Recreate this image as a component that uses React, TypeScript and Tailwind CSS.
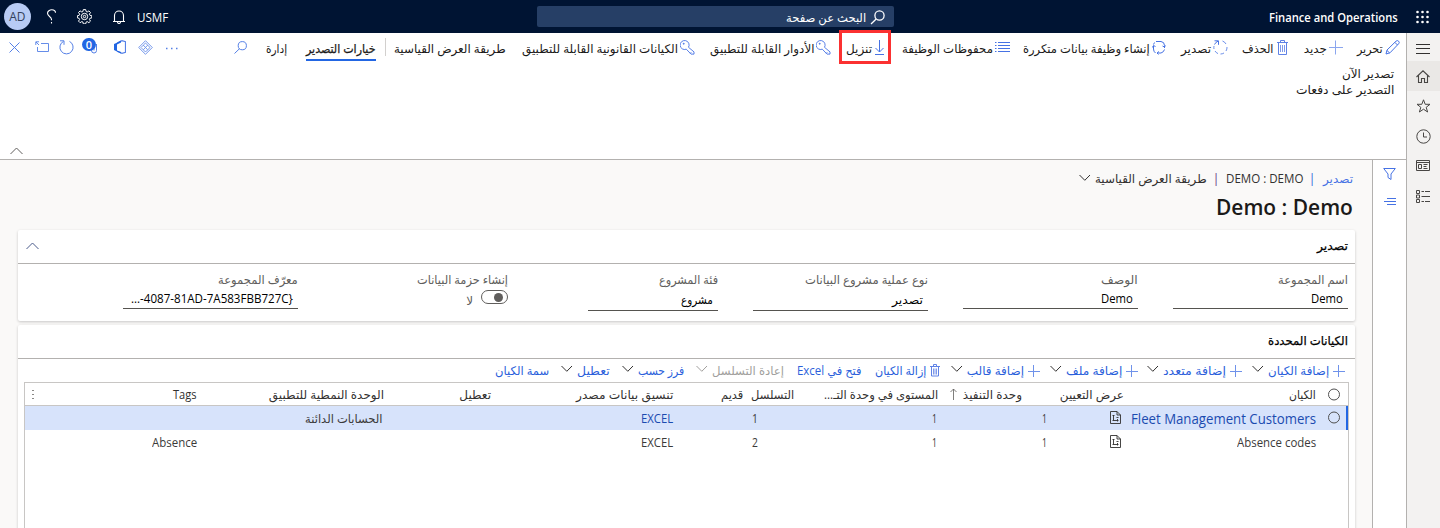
import { useLayoutEffect, useRef, useState, type ReactNode } from 'react';

/* Text that condenses or widens to fill a column of the given width. */
function T({ w, children, className = '', ltr = false }: { w: number; children: ReactNode; className?: string; ltr?: boolean }) {
  const ref = useRef<HTMLSpanElement>(null);
  const [scale, setScale] = useState(1);
  useLayoutEffect(() => {
    if (ref.current) setScale(w / ref.current.offsetWidth);
  }, [w]);
  return (
    <span className={`flex shrink-0 justify-start whitespace-nowrap ${className}`} style={{ width: w }}>
      <span ref={ref} dir={ltr ? 'ltr' : undefined} className="block shrink-0 origin-right" style={{ transform: `scaleX(${scale})` }}>
        {children}
      </span>
    </span>
  );
}

function I({ children, w = 15, h = 15, className = '' }: { children: ReactNode; w?: number; h?: number; className?: string }) {
  return (
    <svg width={w} height={h} viewBox={`0 0 ${w} ${h}`} fill="none" stroke="currentColor" strokeWidth="1" className={`block shrink-0 ${className}`}>
      {children}
    </svg>
  );
}

const Plus = () => <I w={14} className="text-[#8ba6ee]"><path d="M6.500 0.500v14M0 7.500h14" /></I>;
const SmallPlus = () => <I w={12} h={12} className="text-[#6f92ea]"><path d="M5.500 0v12M0 6.500h12" /></I>;
const Trash = () => (
  <I w={11} className="text-[#5f82e6]"><path d="M0 2.500h11M3.500 2.500v-2h4v2M1.500 2.500v12h8v-12" /><path d="M3.500 5v7M5.500 5v7M7.500 5v7" strokeWidth=".8" /></I>
);
const SmallTrash = () => (
  <I w={10} h={13} className="text-[#5f82e6]"><path d="M0 2.500h10M3.500 2.500v-2h3v2M1.500 2.500v9.500h7v-9.500" /><path d="M3.500 4.500v6M5 4.500v6M6.500 4.500v6" strokeWidth=".8" /></I>
);
const Key = () => (
  <I><path d="M8.500 7.300A4.500 4.500 0 1 0 6.300 9.200l4.700 4.900h3v-2.200zM10.300 13.200l1-1" strokeWidth=".9" /><circle cx="3.700" cy="3.700" r=".6" fill="currentColor" strokeWidth=".6" /></I>
);
const Down = ({ className = '' }: { className?: string }) => (
  <I w={12} h={8} className={className}><path d="M.5 1l5.300 5.300L11 1" /></I>
);
const Up = ({ className = '' }: { className?: string }) => (
  <I w={13} h={8} className={className}><path d="M.5 7l6-6 6 6" /></I>
);
const Ring = () => <I w={13} h={13} className="text-[#505050]"><circle cx="7" cy="6.500" r="5.500" /></I>;

function Cmd({ cell, icon, label, w, gap = 'gap-[2px]', box = false }: { cell: string; icon?: ReactNode; label: string; w: number; gap?: string; box?: boolean }) {
  return (
    <div className={`relative flex h-[30px] shrink-0 items-center ${gap} ${cell}`}>
      {icon && <span className="-mt-[2px] text-[#4672e4]">{icon}</span>}
      <T w={w} className="pt-px">{label}</T>
      {box && <span className="absolute -right-[7px] -top-[3px] h-[34px] w-[52px] border-[3px] border-[#fb3131]" />}
    </div>
  );
}

function Icon({ cell, children }: { cell: string; children: ReactNode }) {
  return <div className={`flex h-[28px] shrink-0 items-center text-[#5580e6] ${cell}`}>{children}</div>;
}

function Topbar() {
  return (
    <header className="flex h-[33px] shrink-0 items-center bg-[#001433] text-white">
      <div className="flex w-[50px] justify-start pr-[10px]">
        <I w={14} h={14}>
          {[1.500, 6.500, 11.500].map((y) => [1.500, 6.500, 11.500].map((x) => <circle key={`${x}-${y}`} cx={x} cy={y + 0.500} r="1.300" fill="currentColor" stroke="none" />))}
        </I>
      </div>
      <T w={129} ltr className="mr-[-8px] pt-[2px] text-[12.5px] font-semibold">Finance and Operations</T>
      <div className="mr-[375px] flex h-[21px] w-[357px] shrink-0 items-center rounded-[2px] bg-[#263f66] pr-[9px]">
        <I w={15} h={15} className="mt-px"><circle cx="9.500" cy="5.500" r="4.600" strokeWidth="1.300" /><path d="M6.200 9L1 14" strokeWidth="1.300" /></I>
        <T w={80} className="mr-[4px] pt-[2px]">البحث عن صفحة</T>
      </div>
      <T w={31} ltr className="mr-[369px] pt-[2px] text-[12px]">USMF</T>
      <I w={12} h={14} className="mr-[12px] text-white"><path d="M0 11.500h12M1.500 11.500v-6a4.500 4.500 0 0 1 9 0v6M4.500 12a1.500 1.500 0 0 0 3 0" strokeWidth="1.100" /></I>
      <I w={15} h={15} className="mr-[21px]">
        <path d="M6.300.6h2.400l.4 1.900 1.100.5 1.700-1.100 1.600 1.600-1.100 1.700.5 1.100 1.900.4v2.200l-1.900.4-.5 1.100 1.100 1.700-1.600 1.600-1.700-1.100-1.100.5-.4 1.800H6.300l-.4-1.900-1.100-.4-1.700 1.100-1.600-1.600 1.100-1.700-.5-1.100-1.700-.4V6.700l1.800-.4.5-1.100L1.500 3.500l1.600-1.600L4.800 3l1.100-.5z" />
        <circle cx="7.500" cy="7.500" r="3.200" />
        <circle cx="7.500" cy="7.500" r="1.200" />
      </I>
      <I w={11} h={15} className="mr-[20px]"><path d="M9.500 3.800C9.500 1.600 7.800.8 5.800.8S1.500 2 1.500 4.300C1.500 7.500 5.500 7.500 5.500 10.500v.7M5.500 13v1.500" strokeWidth="1.100" /></I>
      <span className="mr-[15px] flex h-[27px] w-[27px] shrink-0 items-center justify-center rounded-full bg-[#b7cbf5] text-[12px] text-[#33415c]"><T w={16} ltr>AD</T></span>
    </header>
  );
}

function CommandBar() {
  return (
    <div className="flex h-[127px] shrink-0 flex-col border-b border-[#b3b1af] bg-white text-[#1b1a19]">
      <div className="flex h-[30px] shrink-0 pr-[6px]">
        <Cmd cell="w-[57px]" w={26} label="تحرير" icon={<I><path d="M1 14l1-4L11 1.200a1.600 1.600 0 0 1 2.600 2.600L5 12.800zM9.800 2.300l2.700 2.700M2 10.500l2.500 2.300" /></I>} />
        <Cmd cell="w-[55px]" w={23} label="جديد" icon={<Plus />} />
        <Cmd cell="w-[60px]" w={31} gap="gap-[4px]" label="الحذف" icon={<Trash />} />
        <Cmd cell="w-[62px]" w={30} label="تصدير" icon={<I><path d="M9.500 1a6.500 6.500 0 0 1 3.500 3M14 7a6.500 6.500 0 0 1-1 4M11 13a6.500 6.500 0 0 1-3.500 1M5 13.600a6.500 6.500 0 0 1-3-2.600M1 9a6.500 6.500 0 0 1 0-3" strokeWidth=".8" /><path d="M1.500 4.500A6.500 6.500 0 0 1 5 1.200M1.500.8h4v4" /></I>} />
        <Cmd cell="w-[156px]" w={127} label="إنشاء وظيفة بيانات متكررة" icon={<I w={14}><path d="M4 1.500h5a4 4 0 0 1 3.500 4V8M13.500 5.500l-1 1.500-2-1M12.500 9.500a5 5 0 0 1-3.500 3.500H5.500M7 11.500L5 13l1.500 1.500M3.500 13A5 5 0 0 1 1.500 9V6M.3 7.500l1.200-2 2 1M1.500 4.500l1-2" /></I>} />
        <Cmd cell="w-[126px]" w={91} label="محفوظات الوظيفة" icon={<I><path d="M3 2.500h12M3 5.500h12M3 8.500h12M3 11.500h12M0 2.500h1.500M0 5.500h1.500M0 8.500h1.500M0 11.500h1.500" /></I>} />
        <Cmd cell="w-[53px]" w={26} box label="تنزيل" gap="gap-[3px]" icon={<I w={9}><path d="M4.500 0v12M.5 8l4 4 4-4M0 14.500h9" /></I>} />
        <Cmd cell="w-[136px]" w={105} label="الأدوار القابلة للتطبيق" icon={<Key />} />
        <Cmd cell="w-[189px]" w={156} label="الكيانات القانونية القابلة للتطبيق" icon={<Key />} />
        <Cmd cell="w-[120px]" w={112} label="طريقة العرض القياسية" />
        <div className="mt-[5px] h-[18px] w-[8px] shrink-0 border-r border-[#d2d0ce]" />
        <div className="flex h-[28px] w-[91px] shrink-0 items-start pr-[2px]">
          <div className="flex h-[28px] items-center border-b-2 border-[#2266e3]"><T w={70} className="pt-[5px] [-webkit-text-stroke:0.25px_currentColor]">خيارات التصدير</T></div>
        </div>
        <Cmd cell="w-[40px]" w={21} label="إدارة" />
        <Icon cell="w-[68px]"><I w={13} h={13}><circle cx="8.300" cy="4.700" r="4.100" /><path d="M5.500 7.700L.5 12.500" /></I></Icon>
        <Icon cell="w-[26px]"><I w={14} h={5}><path d="M1 3.500h1.500M6 3.500h1.500M11 3.500h1.500" strokeWidth="1.300" /></I></Icon>
        <Icon cell="w-[27px]"><I><path d="M7.500.700l6.800 6.800-6.800 6.800L.700 7.500zM7.500 3l2.200 2.200-2.200 2.200-2.200-2.200zM5.300 5.200L3 7.500l2.300 2.300 2.200-2.300M9.700 5.200L12 7.500 9.700 9.800 7.500 7.500M5.300 9.800L7.500 12l2.200-2.200" strokeWidth=".8" /></I></Icon>
        <Icon cell="w-[28px]"><I w={12} h={14}><path d="M3 3l5-2.300 3.500 1v10.600l-3.500 1-5-2" strokeWidth="1.200" /><path d="M0 4l3.500-1.500L7 .5v2L3 4.500v6L7 12v1.500L0 10z" fill="#2266e3" stroke="none" /></I></Icon>
        <div className="relative flex h-[28px] w-[24px] shrink-0 items-center text-[#5580e6]">
          <I w={16} h={16}><path d="M9.500 8v3.500a2.500 2.500 0 0 0 5 0V5M12 5v6.500" /></I>
          <span className="absolute right-[2px] top-[5px] flex h-[13px] w-[14px] items-center justify-center rounded-full bg-[#2266e3] text-[11px] font-semibold text-white">0</span>
        </div>
        <Icon cell="w-[25px]"><I><path d="M4.500 1.400a6.600 6.600 0 1 0 6 0M1 .8h4v4" /></I></Icon>
        <Icon cell="w-[29px]"><I w={14} h={12}><path d="M6 2.500h7.500v8H2.500V6M1 1l3 3M.8 4V.8H4" strokeWidth=".9" /></I></Icon>
        <Icon cell="w-[19px]"><I w={11} h={11}><path d="M.5.500l10 10M10.500.500l-10 10" /></I></Icon>
      </div>
      <div className="mr-[12px] mt-[3px] flex flex-col">
        <T w={52} className="h-[16px] items-center">تصدير الآن</T>
        <T w={98} className="h-[16px] items-center">التصدير على دفعات</T>
      </div>
      <div className="mt-auto flex justify-end pb-[4px] pl-[10px] text-[#605e5c]"><Up /></div>
    </div>
  );
}

function Sidebar() {
  const item = 'flex h-[30px] items-center justify-center pr-px';
  return (
    <nav className="flex w-[34px] shrink-0 flex-col border-l border-[#b3b1af] bg-[#f3f2f1] text-[#484644]">
      <div className="flex h-[28px] items-center justify-center pr-px pt-[4px] text-[#323130]"><I w={14} h={10}><path d="M0 .500h14M0 4.500h14M0 9.500h14" /></I></div>
      <div className={`${item} bg-[#eae8e6]`}><I w={14} h={13}><path d="M.5 7L7 .8 13.500 7M2.500 5.500v7h3v-4h3v4h3v-7" strokeWidth="1.100" /></I></div>
      <div className={item}><I w={15} h={14}><path d="M7.500.8l1.700 4.500h4.800l-3.800 3 1.400 4.700-4.100-2.800L3.400 13l1.400-4.700L1 5.300h4.800z" /></I></div>
      <div className={item}><I><circle cx="7.500" cy="7.500" r="6.700" /><path d="M7.500 3.500v4.500h3.500" /></I></div>
      <div className={item}><I w={14} h={12}><path d="M.5.500h13v10H.500zM.5 2.500h13M2.500 4.500h3v4h-3zM7.500 4.500h4M7.500 6.500h3M7.500 8.500h4" /></I></div>
      <div className={item}><I w={14} h={13}><path d="M.5.500h3v3h-3zM.5 5h3v3h-3zM.5 9.500h3v3h-3zM5.500 1.500H8M9 1.500h5M5.500 6.500H14M5.500 11.500H8M9 11.500h5" /></I></div>
    </nav>
  );
}

function Field({ cell, line, label, lw, value, vw, ltr = false }: { cell: string; line: string; label: string; lw: number; value: string; vw: number; ltr?: boolean }) {
  return (
    <div className={`flex shrink-0 flex-col pt-[8px] ${cell}`}>
      <T w={lw} className="h-[16px] items-center text-[#605e5c]">{label}</T>
      <div className={`flex items-center border-b border-[#55534f] pr-[5px] text-black ${line}`}>
        <T w={vw} ltr={ltr} className={`h-[18px] items-center ${ltr ? 'pt-[2px]' : 'pt-px'}`}>{value}</T>
      </div>
    </div>
  );
}

function ExportCard() {
  return (
    <section className="flex h-[91px] shrink-0 flex-col rounded-[2px] bg-white shadow-[0_1px_3px_rgba(0,0,0,0.2)]">
      <div className="flex h-[34px] shrink-0 items-center justify-between border-b border-[#b3b1af] pl-[8px] pr-[7px]">
        <T w={31} className="pb-px [-webkit-text-stroke:0.25px_currentColor]">تصدير</T>
        <Up className="-mt-[2px] text-[#4b5a8a]" />
      </div>
      <div className="flex pr-[7px]">
        <Field cell="w-[210px]" line="w-[175px] h-[21px]" label="اسم المجموعة" lw={70} value="Demo" vw={32} ltr />
        <Field cell="w-[210px]" line="w-[175px] h-[21px]" label="الوصف" lw={37} value="Demo" vw={32} ltr />
        <Field cell="w-[210px]" line="w-[175px] h-[23px]" label="نوع عملية مشروع البيانات" lw={123} value="تصدير" vw={31} />
        <Field cell="w-[210px]" line="w-[130px] h-[23px]" label="فئة المشروع" lw={59} value="مشروع" vw={32} />
        <div className="flex w-[210px] shrink-0 flex-col pt-[8px]">
          <T w={91} className="h-[16px] items-center text-[#605e5c]">إنشاء حزمة البيانات</T>
          <div className="flex items-start">
            <span className="mt-[2px] flex h-[14px] w-[27px] items-center rounded-full border border-[#605e5c] pr-[4px]"><span className="h-[9px] w-[9px] rounded-full bg-[#605e5c]" /></span>
            <T w={7} className="mr-[8px] pt-[6px] leading-[14px] text-[#605e5c]">لا</T>
          </div>
        </div>
        <Field cell="w-[210px]" line="w-[175px] h-[21px]" label="معرّف المجموعة" lw={80} value="...-4087-81AD-7A583FBB727C}" vw={162} ltr />
      </div>
    </section>
  );
}

function Tool({ cell, icon, label, w, down = false, className = 'text-[#2b5fdb]', arrow = 'text-[#323130]' }: { cell: string; icon?: ReactNode; label: string; w: number; down?: boolean; className?: string; arrow?: string }) {
  return (
    <div className={`flex shrink-0 items-center gap-[4px] ${cell} ${className}`}>
      {icon}
      <T w={w} className="pt-px">{label}</T>
      {down && <Down className={`-mt-[3px] ${arrow}`} />}
    </div>
  );
}

const MapIcon = () => (
  <I w={11} h={13} className="text-[#323130]"><path d="M.5.500h6.500l3.500 3.500v8.500h-10zM7 .5v3.500h3.500M3.500 4v5.500M2.500 4.500h2M2.500 9.500h6M7.500 8v2.500M6.500 6.500h2" strokeWidth=".9" /></I>
);

function Row({ selected = false, name, nameW, exec, level, seq, app, appW = 0, tag, tagW = 0 }: { selected?: boolean; name: string; nameW: number; exec: string; level: string; seq: string; app?: string; appW?: number; tag?: string; tagW?: number }) {
  return (
    <div className={`flex h-[24px] shrink-0 items-center text-[#3b3a39] ${selected ? 'border-r-2 border-[#2266e3] bg-[#d7e3fb] pr-[6px]' : 'pr-[8px]'}`}>
      <div className="-mt-px flex w-[24px] shrink-0">{selected && <Ring />}</div>
      <div className={`flex w-[195px] shrink-0 ${selected ? 'pt-px text-[14px] text-[#1b4bb0]' : 'pt-[2px]'}`}><T w={nameW} ltr>{name}</T></div>
      <div className="-mt-px flex w-[74px] shrink-0"><MapIcon /></div>
      <div className="flex w-[110px] shrink-0 pt-[2px]"><T w={5} ltr>{exec}</T></div>
      <div className="flex w-[179px] shrink-0 pt-[2px]"><T w={5} ltr>{level}</T></div>
      <div className="flex w-[85px] shrink-0 pt-[2px]"><T w={6} ltr>{seq}</T></div>
      <div className={`flex w-[290px] shrink-0 pt-[2px] ${selected ? 'text-[#1b4bb0]' : ''}`}><T w={32} ltr>EXCEL</T></div>
      <div className="flex w-[186px] shrink-0 pt-px">{app && <T w={appW}>{app}</T>}</div>
      <div className="flex shrink-0 pt-[2px]">{tag && <T w={tagW} ltr>{tag}</T>}</div>
    </div>
  );
}

function EntitiesCard() {
  return (
    <section className="mt-[4px] flex h-[210px] shrink-0 flex-col rounded-[2px] bg-white shadow-[0_1px_3px_rgba(0,0,0,0.2)]">
      <div className="flex h-[34px] shrink-0 items-center border-b border-[#b3b1af] pb-px pr-[7px]">
        <T w={80} className="[-webkit-text-stroke:0.25px_currentColor]">الكيانات المحددة</T>
      </div>
      <div className="flex h-[23px] shrink-0 pr-[10px]">
        <Tool cell="w-[103px]" icon={<SmallPlus />} w={61} label="إضافة الكيان" down />
        <Tool cell="w-[104px]" icon={<SmallPlus />} w={63} label="إضافة متعدد" down />
        <Tool cell="w-[98px]" icon={<SmallPlus />} w={56} label="إضافة ملف" down />
        <Tool cell="w-[100px]" icon={<SmallPlus />} w={57} label="إضافة قالب" down />
        <Tool cell="w-[78px]" icon={<SmallTrash />} w={51} label="إزالة الكيان" />
        <Tool cell="w-[78px]" w={65} label="فتح في Excel" />
        <Tool cell="w-[100px]" w={72} label="إعادة التسلسل" down className="text-[#a19f9d]" arrow="text-[#a19f9d]" />
        <Tool cell="w-[74px]" w={46} label="فرز حسب" down />
        <Tool cell="w-[61px]" w={33} label="تعطيل" down />
        <Tool cell="w-[60px]" w={54} label="سمة الكيان" />
      </div>
      <div className="ml-[6px] mr-[6px] flex flex-1 flex-col border-x border-t border-[#c8c6c4]">
        <div className="flex h-[23px] shrink-0 items-center border-b border-[#c8c6c4] pr-[8px] text-[#323130]">
          <div className="flex w-[24px] shrink-0"><Ring /></div>
          <div className="w-[192px] shrink-0 pt-px"><T w={27}>الكيان</T></div>
          <div className="w-[102px] shrink-0 pt-px"><T w={64}>عرض التعيين</T></div>
          <div className="flex w-[84px] shrink-0 items-center gap-[6px]"><T w={59} className="pt-px">وحدة التنفيذ</T><I w={7} h={12} className="text-[#605e5c]"><path d="M3.500 12V1M.5 4l3-3 3 3" strokeWidth=".8" /></I></div>
          <div className="w-[144px] shrink-0 pt-px"><T w={114}>المستوى في وحدة التـ...</T></div>
          <div className="w-[51px] shrink-0 pt-px"><T w={43}>التسلسل</T></div>
          <div className="w-[70px] shrink-0 pt-px"><T w={22}>قديم</T></div>
          <div className="w-[182px] shrink-0 pt-px"><T w={97}>تنسيق بيانات مصدر</T></div>
          <div className="w-[107px] shrink-0 pt-px"><T w={32}>تعطيل</T></div>
          <div className="w-[187px] shrink-0 pt-px"><T w={115}>الوحدة النمطية للتطبيق</T></div>
          <div className="w-[163px] shrink-0 pt-[2px]"><T w={24} ltr>Tags</T></div>
          <I w={3} h={11} className="text-[#8a8886]"><path d="M1 1.500h2M1 5.500h2M1 9.500h2" /></I>
        </div>
        <Row selected name="Fleet Management Customers" nameW={185} exec="1" level="1" seq="1" app="الحسابات الدائنة" appW={78} />
        <Row name="Absence codes" nameW={79} exec="1" level="1" seq="2" tag="Absence" tagW={45} />
      </div>
    </section>
  );
}

export default function App() {
  return (
    <div dir="rtl" className="flex h-[528px] w-[1440px] flex-col overflow-hidden bg-[#faf9f8] font-['Open_Sans','DejaVu_Sans',sans-serif] text-[12px] leading-[16px]">
      <Topbar />
      <div className="flex min-h-0 flex-1">
        <Sidebar />
        <div className="flex w-[1406px] shrink-0 flex-col">
          <CommandBar />
          <div className="flex flex-1">
            <aside className="flex w-[34px] shrink-0 flex-col items-center border-l border-[#b3b1af] bg-white pt-[8px] text-[#4672e4]">
              <I w={13} h={12}><path d="M.7.500h11.600L8 6v5.500l-3-2V6z" /></I>
              <I w={12} h={8} className="mt-[18px]"><path d="M3 .500h9M0 3.500h12M3 6.500h9" /></I>
            </aside>
            <main className="flex w-[1372px] shrink-0 flex-col pl-[18px] pr-[17px]">
              <div className="mr-[2px] mt-[11px] flex h-[16px] items-center text-[#323130]">
                <T w={30} className="text-[#4672e4]">تصدير</T>
                <span className="mr-[10px] flex w-[2px] justify-center text-[#2b5fdb]">|</span>
                <T w={77} ltr className="mr-[8px]">DEMO : DEMO</T>
                <span className="mr-[9px] flex w-[2px] justify-center text-[#5c2e7e]">|</span>
                <T w={112} className="mr-[8px]">طريقة العرض القياسية</T>
                <Down className="-mt-[3px] mr-[4px]" />
              </div>
              <h1 className="mr-[2px] mt-[5px] flex h-[28px] items-center text-[22px] font-semibold text-[#1b1a19]"><T w={137} ltr>Demo : Demo</T></h1>
              <div className="mt-[10px] flex flex-col">
                <ExportCard />
                <EntitiesCard />
              </div>
            </main>
          </div>
        </div>
      </div>
    </div>
  );
}
